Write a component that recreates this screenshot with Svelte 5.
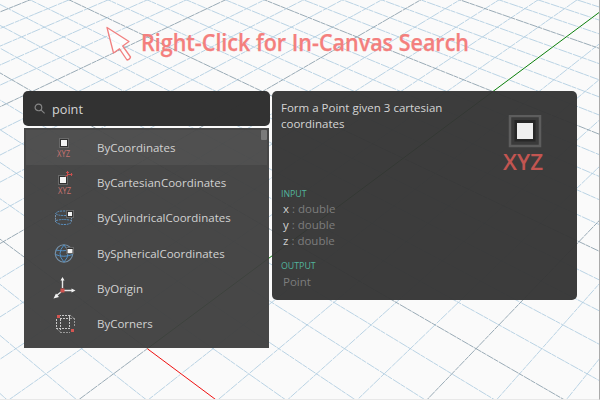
<script>
  const horizon = -511;
  const origin = { x: 147.3, y: 348.7 };
  const step = 0.0000331;
  const k = 0.03824;

  function project(j, m) {
    const depth = 1 / (1 / (origin.y - horizon) + m * step);
    return [origin.x + depth * k * j, depth + horizon];
  }

  const minor = [];
  const major = [];
  for (let n = -40; n <= 40; n++) {
    const up = [...project(2 * n - 4, -4), ...project(2 * n + 32, 32)];
    const down = [...project(2 * n + 4, -4), ...project(2 * n - 32, 32)];
    (n % 5 === 0 ? major : minor).push(up, down);
  }
  const path = (lines) => lines.map(([a, b, c, d]) => `M${a.toFixed(1)} ${b.toFixed(1)}L${c.toFixed(1)} ${d.toFixed(1)}`).join('');
  const axis = (j, m) => path([[...project(0, 0), ...project(j, m)]]);

  const items = [
    { name: 'ByCoordinates', icon: 'xyz' },
    { name: 'ByCartesianCoordinates', icon: 'cartesian' },
    { name: 'ByCylindricalCoordinates', icon: 'cylinder' },
    { name: 'BySphericalCoordinates', icon: 'sphere' },
    { name: 'ByOrigin', icon: 'origin' },
    { name: 'ByCorners', icon: 'corners' }
  ];
  const inputs = ['x', 'y', 'z'];
</script>

<main>
  <svg class="grid" width="600" height="400" viewBox="0 0 600 400">
    <path d={path(minor)} stroke="#a9c9de" stroke-width=".8" stroke-dasharray="9 1 5 .5" />
    <path d={path(major)} stroke="#8297a4" stroke-width=".8" stroke-dasharray="8 .8 5 .5" />
    <path d={axis(24, 24)} stroke="#fafafa" stroke-width="2" />
    <path d={axis(24, 24)} stroke="#0b800b" stroke-width="1" />
    <path d={axis(4, -4)} stroke="#fafafa" stroke-width="2" />
    <path d={axis(4, -4)} stroke="#f01010" stroke-width="1" />
  </svg>

  <header>
    <svg width="28" height="36" viewBox="0 0 28 36">
      <path d="M1 1.500L23 15.500l-6.300 4.500 7.800 11q-.5 2.500-3.500 3L13.500 22.800 7.500 27z" fill="#fff" fill-opacity=".65" stroke="#f17f7f" stroke-width="1.300" stroke-linejoin="round" />
    </svg>
    <svg class="title" width="330" height="34" viewBox="0 0 330 34">
      <text x="0" y="26.400" textLength="328" lengthAdjust="spacingAndGlyphs">Right-Click for In-Canvas Search</text>
    </svg>
  </header>

  <div class="panels">
    <section class="left">
      <div class="search">
        <svg width="12" height="12" viewBox="0 0 13 13" fill="none" stroke="#858585" stroke-width="1.300">
          <circle cx="4.800" cy="4.800" r="3.600" /><path d="M7.500 7.500l4 3.700" />
        </svg>
        <span>point</span>
      </div>
      <div class="list">
        {#each items as item, i}
          <div class="item" class:active={i === 0}>
            <svg class="icon" width="24" height="24" viewBox="0 0 24 24" fill="none">
              {#if item.icon === 'xyz'}
                <rect x="7.500" y="3.500" width="9" height="9" fill="#303030" stroke="#686868" />
                <rect x="9" y="5" width="6" height="6" fill="#f4f4f4" />
                <text x="5" y="21.700" textLength="13" lengthAdjust="spacingAndGlyphs">XYZ</text>
              {:else if item.icon === 'cartesian'}
                <rect x="6.500" y="5.500" width="9" height="9" fill="#303030" stroke="#686868" />
                <rect x="8" y="7" width="6" height="6" fill="#f4f4f4" />
                <path d="M15.500 6V1M15 4.500h5.500M19.500 3v3M14 2.500h3M15 5l-1.500 2" stroke="#c9504e" />
                <text x="6" y="23.700" textLength="13" lengthAdjust="spacingAndGlyphs">XYZ</text>
              {:else if item.icon === 'cylinder'}
                <path d="M3.500 9v7M19.500 11v5" stroke="#7792ab" stroke-dasharray="2 .7" />
                <path d="M3.500 8q1-3 8-3h3M4 8q2 1.500 8 1.500h3M4 14.500q8-2 15 0M4 16q2 2.500 8 2.500t7.500-2.500" stroke="#5a93c6" stroke-dasharray="2 .8" />
                <rect x="14.500" y="4.500" width="7" height="7" fill="#333" stroke="#666" />
                <rect x="16" y="6" width="4" height="4" fill="#f4f4f4" />
              {:else if item.icon === 'sphere'}
                <circle cx="12" cy="12.500" r="8.700" stroke="#7793ab" stroke-width="1.100" />
                <path d="M12 4q-8 8.500 0 17M12 4q8 8.500 0 17M4 9q8 1.500 11 0M3.500 13.500q8 3.500 17 0" stroke="#528fc3" />
                <rect x="14.500" y="6.500" width="7" height="6" fill="#333" stroke="#666" />
                <rect x="15.500" y="8" width="5" height="4" fill="#f4f4f4" />
              {:else if item.icon === 'origin'}
                <path d="M10.500 12V3M12 14.500h9M9 16l-5 4" stroke="#e8e8e8" stroke-width="1.400" />
                <path d="M8.500 4.500l2-3.500 2 3.500zM19.500 12.500l4 2-4 2zM4 17.500l-2.500 5 5.500-1.500z" fill="#f2f2f2" />
                <rect x="8.500" y="12.500" width="4" height="4" fill="#cf5450" />
              {:else}
                <path d="M7 3.500h11M4.500 7v9M8.500 7v11M17.500 4v13M4 16.500h14M8 6.500h10" stroke="#c8c8c8" stroke-dasharray="2 1" />
                <path d="M22.500 6v9M8 20.500h10M18 6.500h4M5 17l4 3.500M18 3l4 3.500" stroke="#999" stroke-dasharray="2 1" />
                <rect x="5" y="3" width="3" height="3" fill="#d45551" />
                <rect x="19" y="17" width="3" height="3" fill="#d45551" />
              {/if}
            </svg>
            <span>{item.name}</span>
          </div>
        {/each}
        <i class="thumb"></i>
      </div>
    </section>

    <section class="info">
      <div class="description">
        <p>Form a Point given 3 cartesian coordinates</p>
        <svg width="44" height="64" viewBox="0 0 44 64">
          <rect x="8" y="1" width="30" height="30" fill="#3a3a3a" stroke="#5d5d5d" stroke-width="2.500" />
          <rect x="12.500" y="5" width="21" height="21.500" fill="#272727" />
          <rect x="15" y="8" width="16" height="16" fill="#efefef" />
          <text x="1" y="55" textLength="40" lengthAdjust="spacingAndGlyphs">XYZ</text>
        </svg>
      </div>
      <h2>INPUT</h2>
      <ul>
        {#each inputs as name}
          <li><b>{name}</b> : double</li>
        {/each}
      </ul>
      <h2 class="out">OUTPUT</h2>
      <p class="result">Point</p>
    </section>
  </div>
</main>

<style>
  main {
    position: relative;
    box-sizing: border-box;
    width: 600px;
    height: 400px;
    overflow: hidden;
    background: #fafafa;
    border-right: 1px solid #aaa;
    border-bottom: 1px solid #e8e8e8;
    font-family: "Open Sans", "Noto Sans", sans-serif;
  }
  .grid { position: absolute; inset: 0; fill: none; }
  header {
    position: relative;
    display: flex;
    gap: 7px;
    height: 65px;
    padding: 26px 0 0 106px;
  }
  .title { overflow: visible; margin-top: -1px; }
  .title text { font-size: 23px; font-weight: 600; fill: #f47f7d; stroke: #f47f7d; stroke-width: .25px; }
  .panels { position: relative; display: flex; align-items: flex-start; gap: 2px; padding-left: 23px; }
  .left { width: 247px; }
  .search {
    display: flex;
    align-items: center;
    gap: 6px;
    height: 35px;
    box-sizing: border-box;
    padding-left: 11px;
    border-radius: 5px;
    background: rgba(48, 48, 48, .99);
    color: #d4d4d4;
    font-size: 12.700px;
  }
  .list {
    position: relative;
    margin: 2px 1px 0;
    height: 220px;
    box-sizing: border-box;
    padding: 2px 2px 0;
    background: rgba(64, 64, 64, .96);
  }
  .item {
    display: flex;
    align-items: center;
    height: 35.300px;
    padding-left: 26px;
    gap: 21px;
    color: #d2d2d2;
    font-size: 11.500px;
  }
  .item span { margin-top: -1px; }
  .active { background: rgba(255, 255, 255, .05); }
  .icon { overflow: visible; margin-top: -1px; }
  .icon text { font-size: 9px; fill: #c97370; }
  .thumb { position: absolute; top: 2px; right: 2px; width: 6px; height: 10px; border-radius: 1px; background: #7b7b7b; }
  .info {
    box-sizing: border-box;
    width: 305px;
    height: 209px;
    padding: 9px 31px 0 9px;
    border-radius: 5px;
    background: rgba(53, 53, 53, .965);
    color: #d5d5d5;
  }
  .description { display: flex; justify-content: space-between; height: 88px; }
  p { margin: 0; width: 180px; font-size: 11.500px; line-height: 16px; }
  .description svg { margin-top: 15px; }
  .description text { font-size: 22px; font-weight: 600; fill: #c25551; }
  h2 { margin: 0; font-size: 8.800px; line-height: 13px; font-weight: 400; color: #52b49c; }
  ul { margin: 0 0 0 2px; padding: 0; list-style: none; }
  li { font-size: 11.500px; line-height: 16px; color: #7d7d7d; }
  b { font-weight: 400; color: #d0d0d0; }
  .out { margin-top: 11px; }
  .result { margin: 1px 0 0 2px; color: #7d7d7d; }
</style>
